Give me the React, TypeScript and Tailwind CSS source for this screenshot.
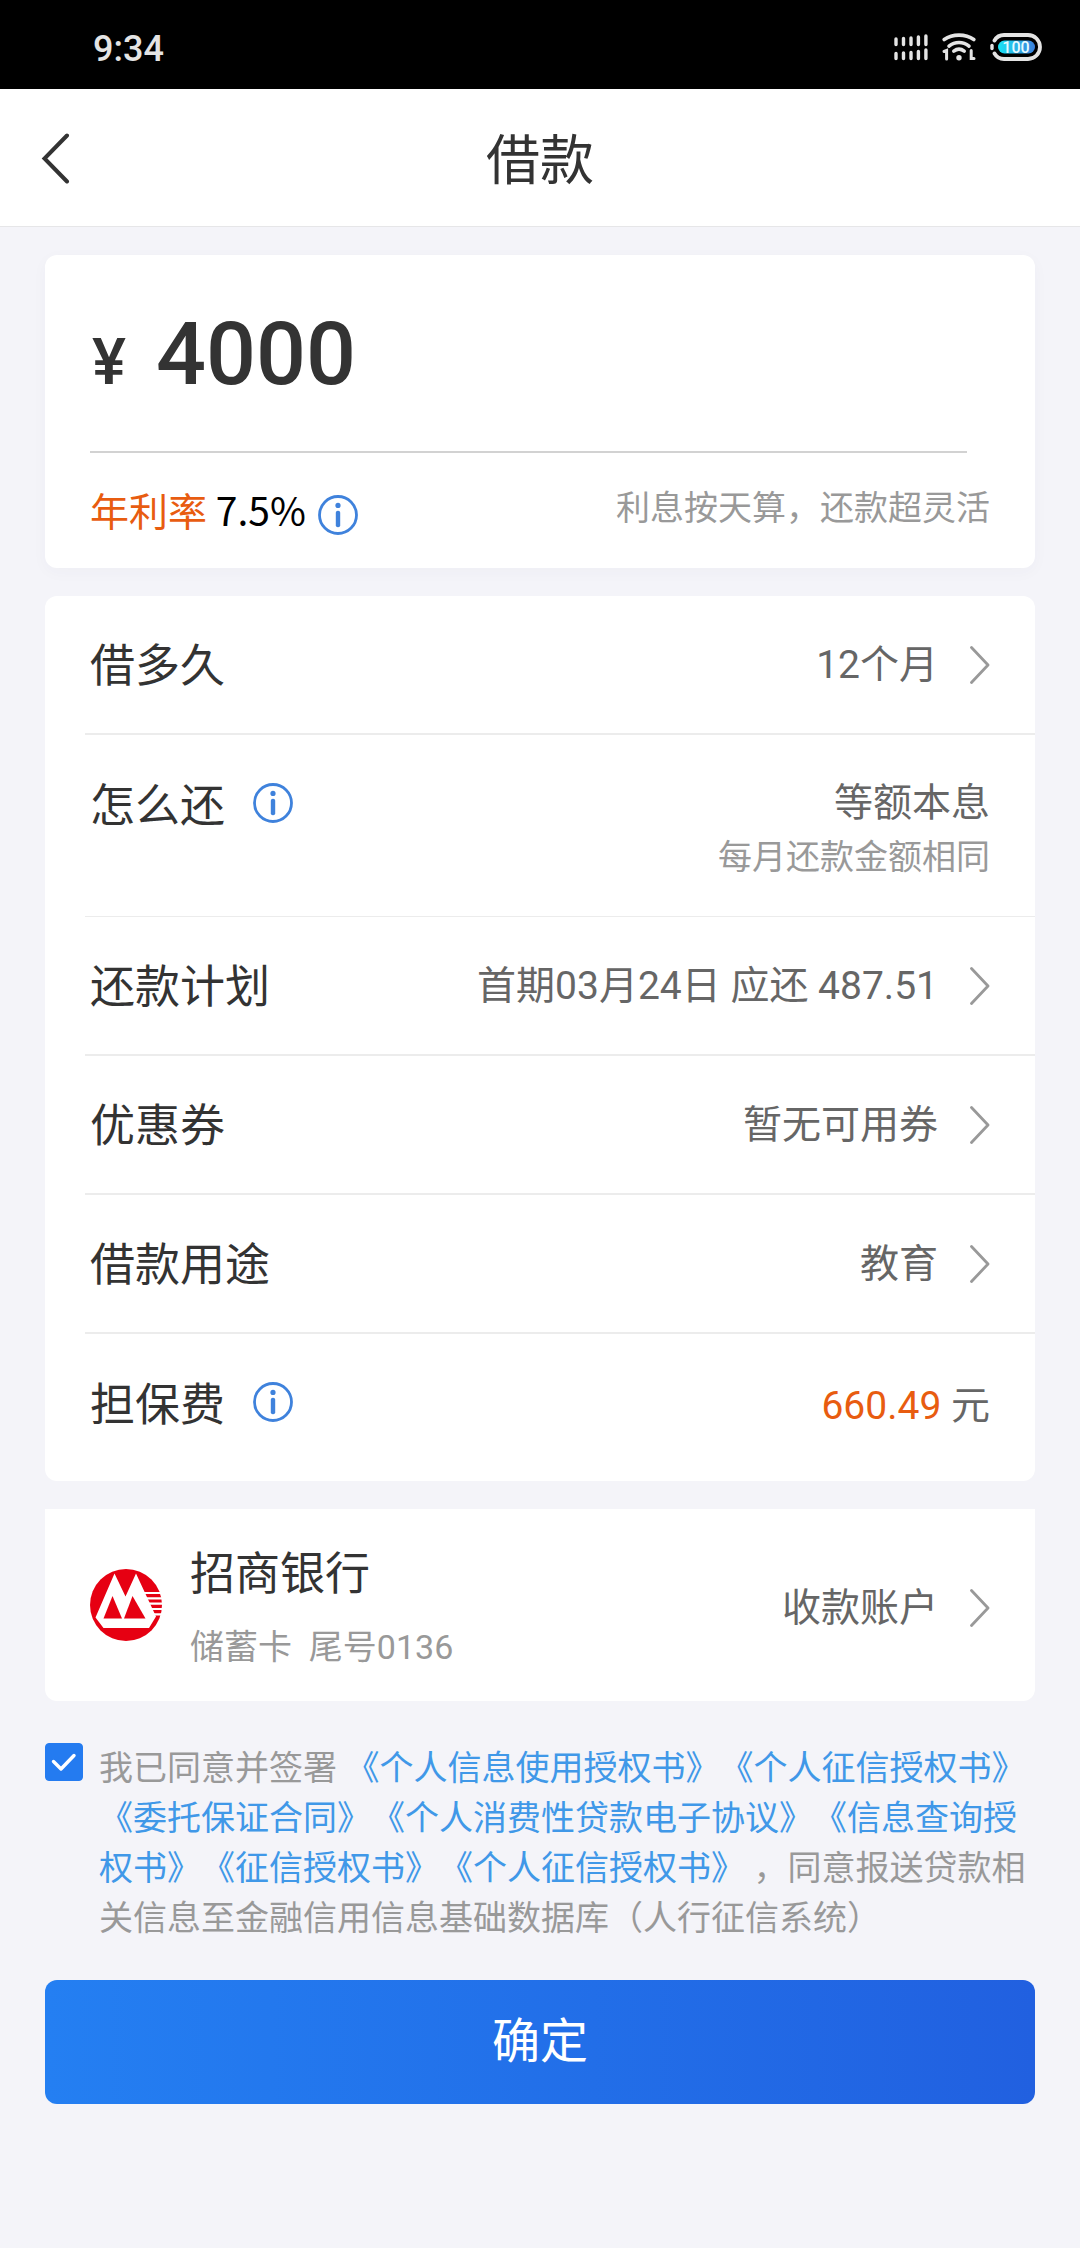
import { useState } from 'react';
import type { ReactNode } from 'react';

const agreements = [
  '《个人信息使用授权书》',
  '《个人征信授权书》',
  '《委托保证合同》',
  '《个人消费性贷款电子协议》',
  '《信息查询授权书》',
  '《征信授权书》',
  '《个人征信授权书》',
];

function StatusBar() {
  return (
    <div className="h-[89px] bg-black flex items-center justify-between pl-[93px] pr-[38px] pt-1">
      <span className="pt-1 text-[36px] leading-10 font-medium text-[#e4e4e4]">9:34</span>
      <div className="flex items-center gap-[14px]">
        {/* Dual sim signal */}
        <svg width="34" height="28" viewBox="0 0 34 28" stroke="#e4e4e4" strokeWidth="3.4" strokeLinecap="round">
          <path d="M2 6V11.500M9.500 5.500V11.500M17 5V11.500M24.400 4V11.500M31.900 3V11.500" />
          <path d="M2 20.500V25.500M9.500 20V25.500M17 19.500V25.500M24.400 18.500V25.500M31.900 17V25.500" />
        </svg>
        <svg width="34" height="28" viewBox="0 0 34 28" fill="none" stroke="#e4e4e4" strokeWidth="3.6" strokeLinecap="round">
          <path d="M2.200 6.500C10.500 .7 23.500 .7 31.800 6.500" />
          <path d="M7 13.200C13 8.200 21 8.200 27 13.200" />
          <path d="M11.800 18.200C15 15.700 19 15.700 22.200 18.200" />
          <circle cx="17" cy="24.800" r="2.700" fill="#e4e4e4" stroke="none" />
          <path d="M2 18.500L4.600 17.500V26" strokeWidth="3" />
          <path d="M29.200 17.500V25.500H32" strokeWidth="3" />
        </svg>
        <svg width="52" height="28" viewBox="0 0 52 28" fill="none">
          <defs>
            <linearGradient id="charge" x1="0" y1="0" x2="1" y2="0">
              <stop offset="0" stopColor="#17e4f4" />
              <stop offset="1" stopColor="#3b7fdc" />
            </linearGradient>
          </defs>
          <path
            d="M4.500 7.500C6.500 4 9.500 2 14 2H38A12 12 0 0 1 38 26H14C9.500 26 6.500 24 4.500 20.500"
            stroke="#e4e4e4"
            strokeWidth="3.800"
            strokeLinecap="round"
          />
          <path d="M2 12.500V15.500" stroke="#e4e4e4" strokeWidth="3.400" strokeLinecap="round" />
          <rect x="8" y="7.500" width="37" height="13" rx="6.500" fill="url(#charge)" />
          <text x="26" y="19.800" fontSize="16" fontWeight="500" textAnchor="middle" fill="#e8fbff">100</text>
        </svg>
      </div>
    </div>
  );
}

function InfoButton({ label }: { label: string }) {
  return (
    <button type="button" aria-label={label}>
      <svg width="40" height="40" viewBox="0 0 40 40" fill="none">
        <circle cx="20" cy="20" r="18.500" stroke="#3f82dc" strokeWidth="2.800" />
        <circle cx="20" cy="10.400" r="2.600" fill="#3f82dc" />
        <rect x="17.800" y="15.800" width="4.400" height="16.400" rx="2" fill="#3f82dc" />
      </svg>
    </button>
  );
}

function Chevron() {
  return (
    <svg className="shrink-0" width="20" height="38" viewBox="0 0 20 38" fill="none" stroke="#999" strokeWidth="2.800" strokeLinecap="round" strokeLinejoin="round">
      <path d="M1.500 1.500L18 19L1.500 36.500" />
    </svg>
  );
}

function LinkRow({ label, children }: { label: string; children: ReactNode }) {
  return (
    <button type="button" className="w-full h-[139px] pl-[5px] pr-[45px] flex items-center justify-between text-left border-b-2 border-[#ececec]">
      <span className="pt-1 text-[45px] leading-[60px] text-[#333]">{label}</span>
      <span className="flex items-center gap-8 text-[39px] leading-[52px] text-[#666]">
        {children}
        <Chevron />
      </span>
    </button>
  );
}

function InfoLabel({ label }: { label: string }) {
  return (
    <div className="flex items-start gap-[28px]">
      <span className="text-[45px] leading-[60px] text-[#333]">{label}</span>
      <div className="pt-1.5">
        <InfoButton label={`${label}说明`} />
      </div>
    </div>
  );
}

function BankLogo() {
  return (
    <svg className="shrink-0" width="72" height="72" viewBox="0 0 72 72">
      <circle cx="36" cy="36" r="36" fill="#e60012" />
      <path d="M24.500 4.500L5.500 48.500L13.500 59H59L66 47.500L46 4.500L35.500 27.500Z" fill="#fff" />
      <path d="M22.500 27L32 49.500H13.500Z" fill="#e60012" />
      <path d="M42.500 27L55.500 49.500H34Z" fill="#e60012" />
      <path
        d="M54 24H72M56 29.300H72M59 34.600H72M61 40H72M63 45.300H72"
        stroke="#fff"
        strokeWidth="2.200"
      />
    </svg>
  );
}

export default function App() {
  const [amount, setAmount] = useState('4000');
  const [agreed, setAgreed] = useState(true);

  return (
    <div className="min-h-screen bg-[#f4f4f9] font-[Roboto,'Noto_Sans_CJK_SC',sans-serif]">
      <StatusBar />

      <header className="h-[138px] bg-white border-b border-[#e6e6e8] px-10 grid grid-cols-[1fr_auto_1fr] items-center">
        <button type="button" aria-label="返回" className="justify-self-start">
          <svg width="32" height="52" viewBox="0 0 32 52" fill="none" stroke="#333" strokeWidth="4" strokeLinecap="round">
            <path d="M27 3.500L4.500 26.500L27 49.500" />
          </svg>
        </button>
        <h1 className="pt-2 text-[54px] leading-[72px] text-[#333]">借款</h1>
      </header>

      <main className="px-[45px] pt-7">
        {/* Amount */}
        <section className="bg-white rounded-xl shadow-[0_4px_16px_rgba(60,60,100,0.03)] px-[45px] pt-[45px] pb-[33px]">
          <div className="flex items-baseline h-[153px] mr-[23px] border-b-2 border-[#d2d2d2]">
            <label htmlFor="amount" className="w-[66px] pl-0.5 text-[64px] font-medium text-[#333]">¥</label>
            <input
              id="amount"
              inputMode="numeric"
              className="min-w-0 flex-1 h-[108px] text-[88px] font-medium text-[#333] outline-none"
              value={amount}
              onChange={(e) => setAmount(e.target.value)}
            />
          </div>
          <div className="flex items-center justify-between pt-[30px]">
            <div className="flex items-end gap-3">
              <p className="text-[39px] leading-[52px] text-black font-['Noto_Sans_CJK_SC',sans-serif]">
                <span className="text-[#e85c10]">年利率</span> 7.5%
              </p>
              <InfoButton label="年利率说明" />
            </div>
            <p className="text-[34px] leading-[46px] pb-0.5 text-[#999]">利息按天算，还款超灵活</p>
          </div>
        </section>

        {/* Loan details */}
        <section className="mt-7 bg-white rounded-xl pl-10">
          <LinkRow label="借多久">12个月</LinkRow>
          <div className="h-[182px] pl-[5px] pr-[45px] pt-[42px] flex items-start justify-between border-b border-[#ececec]">
            <InfoLabel label="怎么还" />
            <div className="text-right">
              <p className="text-[39px] leading-[52px] text-[#666]">等额本息</p>
              <p className="text-[34px] leading-[56px] text-[#999]">每月还款金额相同</p>
            </div>
          </div>
          <LinkRow label="还款计划">首期03月24日 应还 487.51</LinkRow>
          <LinkRow label="优惠券">暂无可用券</LinkRow>
          <LinkRow label="借款用途">教育</LinkRow>
          <div className="h-[147px] pl-[5px] pr-[45px] pt-[42px] flex items-start justify-between">
            <InfoLabel label="担保费" />
            <p className="text-[39px] leading-[60px] text-[#666]">
              <span className="text-[#e85c10]">660.49</span> 元
            </p>
          </div>
        </section>

        {/* Receiving account */}
        <button type="button" className="mt-7 w-full h-[192px] bg-white rounded-b-xl px-[45px] flex items-center justify-between text-left">
          <span className="flex items-center gap-7">
            <BankLogo />
            <span className="flex flex-col gap-3 pt-3">
              <span className="text-[45px] leading-[60px] text-[#333]">招商银行</span>
              <span className="text-[34px] leading-[60px] text-[#999] whitespace-pre">储蓄卡  尾号0136</span>
            </span>
          </span>
          <span className="flex items-center gap-8 pt-1.5 text-[39px] leading-[52px] text-[#666]">
            收款账户
            <Chevron />
          </span>
        </button>

        {/* Agreements */}
        <div className="mt-[42px] flex items-start gap-4">
          <span className="relative flex shrink-0">
            <input
              id="agree"
              type="checkbox"
              checked={agreed}
              onChange={(e) => setAgreed(e.target.checked)}
              className="appearance-none w-[38px] h-[38px] rounded border border-[#247bf0] bg-white checked:bg-[#247bf0]"
            />
            {agreed && (
              <svg className="absolute inset-0 pointer-events-none" width="38" height="38" viewBox="0 0 38 38" fill="none" stroke="#fff" strokeWidth="3.400" strokeLinecap="round" strokeLinejoin="round">
                <path d="M8.500 18.500L16 26L29 12.500" />
              </svg>
            )}
          </span>
          <p className="text-[34px] leading-[50px] text-[#999] [text-spacing-trim:space-all]">
            <label htmlFor="agree">我已同意并签署</label>{' '}
            {agreements.map((name, i) => (
              <a key={i} href="#" className="text-[#4098e8]">{name}</a>
            ))}
            {' '}，同意报送贷款相关信息至金融信用信息基础数据库（人行征信系统）
          </p>
        </div>

        <button
          type="button"
          disabled={!agreed}
          className="mt-[37px] w-full h-[124px] rounded-xl bg-linear-to-r from-[#247ff2] to-[#2160e0] text-white text-[48px] leading-[64px]"
        >
          确定
        </button>
      </main>
    </div>
  );
}
